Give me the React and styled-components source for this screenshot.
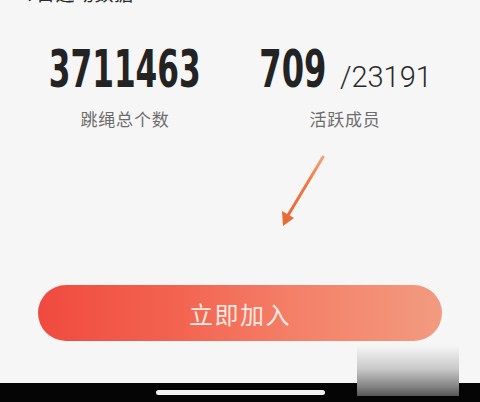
import React from "react";
import styled, { createGlobalStyle } from "styled-components";

const GlobalStyle = createGlobalStyle`
  html, body {
    margin: 0;
    padding: 0;
    background: #f6f6f6;
  }
  * {
    box-sizing: border-box;
  }
`;

const Page = styled.div`
  position: relative;
  width: 480px;
  height: 402px;
  overflow: hidden;
  display: flex;
  flex-direction: column;
  background: #f6f6f6;
  font-family: "Noto Sans CJK SC", "Noto Sans", sans-serif;
`;

// section heading, scrolled mostly out of view at the top
const SectionTitle = styled.div`
  margin-top: -18px;
  padding-left: 25px;
  font-size: 19px;
  line-height: 22px;
  color: #2c2c2c;
  letter-spacing: 0.5px;
`;

const Stats = styled.div`
  display: grid;
  grid-template-columns: 250px 190px;
  margin-top: 40px;
`;

const Stat = styled.div`
  display: flex;
  flex-direction: column;
  align-items: center;
`;

const ValueRow = styled.div`
  display: flex;
  align-items: baseline;
  height: 52px;
`;

const BigNumber = styled.span`
  display: inline-block;
  font-family: "DejaVu Sans Condensed", "DejaVu Sans", sans-serif;
  font-weight: bold;
  font-size: 51px;
  line-height: 52px;
  color: #232323;
  transform: scaleX(${(p) => p.$squeeze});
  margin: 0 ${(p) => p.$pull}px;
`;

const Total = styled.span`
  font-family: Roboto, "Liberation Sans", sans-serif;
  font-weight: 300;
  font-size: 29px;
  color: #2a2a2a;
  margin-left: 12px;
`;

const Label = styled.div`
  margin-top: 13px;
  font-size: 17px;
  line-height: 20px;
  color: #6c6c6c;
  letter-spacing: 0.8px;
`;

const ArrowArea = styled.div`
  height: 156px;
  padding: 24px 0 0 278px;
`;

const JoinButton = styled.button`
  margin: 0 38px;
  height: 56px;
  border: none;
  border-radius: 28px;
  background: linear-gradient(90deg, #f04a3f 0%, #f36450 35%, #f48169 65%, #f29b80 100%);
  color: #fbe9e2;
  font-family: "Noto Sans CJK SC", sans-serif;
  font-size: 24px;
  letter-spacing: 1.5px;
  cursor: pointer;
`;

const HomeBar = styled.div`
  margin-top: auto;
  height: 19px;
  background: #050505;
  display: flex;
  justify-content: center;
  padding-top: 7px;
`;

const Indicator = styled.div`
  width: 169px;
  height: 5px;
  border-radius: 3px;
  background: #f2f2f2;
`;

const Smudge = styled.div`
  position: absolute;
  right: 21px;
  bottom: 6px;
  width: 102px;
  height: 49px;
  background: linear-gradient(180deg, #f3f3f3 0%, #c9c9c9 45%, #858585 80%, #565656 100%);
`;

function Arrow() {
  return (
    <svg width="50" height="78" viewBox="0 0 50 78">
      <defs>
        <linearGradient id="ar" x1="1" y1="0" x2="0" y2="1">
          <stop offset="0" stopColor="#f4a27c" />
          <stop offset="0.4" stopColor="#ee7a45" />
          <stop offset="1" stopColor="#ea6a35" />
        </linearGradient>
      </defs>
      <line x1="45" y1="4" x2="9" y2="64" stroke="url(#ar)" strokeWidth="3" strokeLinecap="round" />
      <polygon points="5,73 4,58 16,65" fill="#ea6a35" />
    </svg>
  );
}

export default function App() {
  return (
    <>
      <GlobalStyle />
      <Page>
        <SectionTitle>7日运动数据</SectionTitle>
        <Stats>
          <Stat>
            <ValueRow>
              <BigNumber $squeeze={0.68} $pull={-32}>3711463</BigNumber>
            </ValueRow>
            <Label>跳绳总个数</Label>
          </Stat>
          <Stat>
            <ValueRow>
              <BigNumber $squeeze={0.7} $pull={-13}>709</BigNumber>
              <Total>/23191</Total>
            </ValueRow>
            <Label>活跃成员</Label>
          </Stat>
        </Stats>
        <ArrowArea>
          <Arrow />
        </ArrowArea>
        <JoinButton type="button">立即加入</JoinButton>
        <HomeBar>
          <Indicator />
        </HomeBar>
        <Smudge />
      </Page>
    </>
  );
}
